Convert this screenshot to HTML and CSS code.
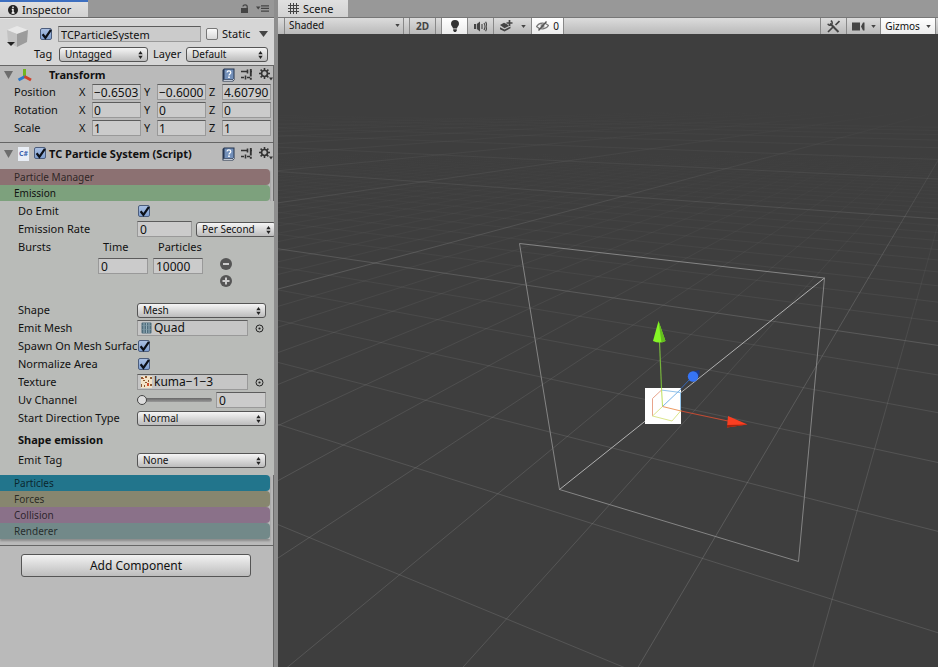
FILE: index.html
```html
<!DOCTYPE html>
<html lang="en">
<head>
<meta charset="utf-8">
<title>Scene editor</title>
<link rel="stylesheet" href="styles.css">
</head>
<body>
<svg class="sprite" aria-hidden="true">
  <symbol id="i-updown" viewBox="0 0 5 8"><path d="M0.3 3.2 2.5 0 4.7 3.2zM0.3 4.8 2.5 8 4.7 4.8z" fill="#222"/></symbol>
  <symbol id="i-check" viewBox="0 0 13 13"><path d="M2.6 6.2 5.4 9.8 10.9 1.8" fill="none" stroke="#0c1018" stroke-width="2.2"/></symbol>
  <symbol id="i-caret" viewBox="0 0 9 6"><path d="M0 0h9L4.5 6z" fill="#444"/></symbol>
  <symbol id="i-fold" viewBox="0 0 9 8"><path d="M0 0h9L4.5 8z" fill="#6d6d6d"/></symbol>
  <symbol id="i-book" viewBox="0 0 13 14"><path d="M.5 2 2 .5h10.500v11L11 13.500H.5z" fill="#24344f"/><path d="M1.500 12.300h9.200l1.100-1.100" stroke="#e8edf4" stroke-width="1" fill="none"/><rect x="2.500" y="1.500" width="9" height="9.600" fill="#7390ba"/><path d="M5 4.600c0-2.200 3.800-2.200 3.800 0 0 1.400-1.800 1.300-1.800 2.800" fill="none" stroke="#fff" stroke-width="1.200"/><circle cx="7" cy="9.200" r=".9" fill="#fff"/></symbol>
  <symbol id="i-preset" viewBox="0 0 12 13"><path d="M0 3.500h6M9 3.500h2M0 9.500h3M6 9.500h3" stroke="#333" stroke-width="1.500"/><path d="M6.500 1.500v4M4.500 7.500v4" stroke="#333" stroke-width="1.600"/><path d="M9.800 1v7.500M9.800 9.800v2" stroke="#333" stroke-width="1.900"/></symbol>
  <symbol id="i-gear" viewBox="0 0 14 13"><circle cx="5.500" cy="5.500" r="3" fill="none" stroke="#333" stroke-width="1.700"/><path d="M5.500 0v2.400M5.500 8.600V11M0 5.500h2.400M8.600 5.500H11M1.600 1.600l1.700 1.700M7.700 7.700l1.700 1.700M9.400 1.600 7.700 3.300M3.300 7.700 1.600 9.400" stroke="#333" stroke-width="1.600"/><path d="M10 9.500h4L12 12.500z" fill="#333"/></symbol>
  <symbol id="i-target" viewBox="0 0 9 9"><circle cx="4.500" cy="4.500" r="3.500" fill="none" stroke="#222" stroke-width="1"/><circle cx="4.500" cy="4.500" r="1.100" fill="#222"/></symbol>
</svg>

<div class="editor">
  <aside class="inspector">
    <header class="tabs">
      <div class="tab tab-active"><svg width="10" height="10" viewBox="0 0 10 10"><circle cx="5" cy="5" r="5" fill="#222"/><path d="M5 1.500v1.600M3.800 4.500H5v3.200M3.600 8h2.900" stroke="#fff" stroke-width="1.400" fill="none"/></svg>Inspector</div>
      <div class="tab-tools">
        <svg width="8" height="9" viewBox="0 0 8 9"><path d="M0 4h7v5H0z" fill="#444"/><path d="M2 2.600C2 .2 6.200.2 6.200 2.600V4.500" fill="none" stroke="#444" stroke-width="1.200"/></svg>
        <svg width="13" height="7" viewBox="0 0 13 7"><path d="M0 1.500h4.500L2.200 4.500zM5 .2h8v1.300H5zM5 2.800h8v1.300H5zM5 5.400h8v1.300H5z" fill="#444"/></svg>
      </div>
    </header>

    <section class="object">
      <svg class="cube" width="24" height="24" viewBox="0 0 24 24"><path d="M11 1 22 5 11 9 1 5z" fill="#e8e8e8"/><path d="M1 5 11 9v13L2 17z" fill="#c2c2c2"/><path d="M22 5 11 9v13l10-5z" fill="#9c9c9c"/><path d="M1 17h8l-4 4z" fill="#222"/></svg>
      <div class="object-fields">
        <div class="object-row">
          <span class="check"><input type="checkbox" checked aria-label="Active"><svg><use href="#i-check"/></svg></span>
          <input class="field name-field" type="text" value="TCParticleSystem" aria-label="Name">
          <span class="check check-empty"><input type="checkbox" id="static"></span>
          <label for="static">Static</label>
          <button class="bare" aria-label="Static options"><svg width="9" height="6"><use href="#i-caret"/></svg></button>
        </div>
        <div class="object-row tag-row">
          <label class="tag-label" for="tag">Tag</label>
          <span class="select select-tag"><select id="tag"><option>Untagged</option></select><svg><use href="#i-updown"/></svg></span>
          <label class="layer-label" for="layer">Layer</label>
          <span class="select select-layer"><select id="layer"><option>Default</option></select><svg><use href="#i-updown"/></svg></span>
        </div>
      </div>
    </section>

    <section class="component transform">
      <header class="component-head">
        <svg class="fold" width="9" height="8"><use href="#i-fold"/></svg>
        <svg width="16" height="14" viewBox="0 0 16 14"><path d="M7.500 8V1" stroke="#72b51e" stroke-width="3"/><path d="M8 8.500 1.500 12" stroke="#2d78c8" stroke-width="3"/><path d="M7.500 8.500 14 12" stroke="#d0402a" stroke-width="3"/></svg>
        <h2 class="no-check">Transform</h2>
        <div class="head-tools"><svg width="13" height="14"><use href="#i-book"/></svg><svg width="12" height="13"><use href="#i-preset"/></svg><svg width="14" height="13"><use href="#i-gear"/></svg></div>
      </header>
      <div class="vector"><span class="vector-name">Position</span>
        <label>X<input class="field" value="−0.6503"></label><label>Y<input class="field" value="−0.6000"></label><label>Z<input class="field" value="4.60790"></label></div>
      <div class="vector"><span class="vector-name">Rotation</span>
        <label>X<input class="field" value="0"></label><label>Y<input class="field" value="0"></label><label>Z<input class="field" value="0"></label></div>
      <div class="vector"><span class="vector-name">Scale</span>
        <label>X<input class="field" value="1"></label><label>Y<input class="field" value="1"></label><label>Z<input class="field" value="1"></label></div>
    </section>

    <section class="component script">
      <header class="component-head">
        <svg class="fold" width="9" height="8"><use href="#i-fold"/></svg>
        <span class="file-icon">C#</span>
        <span class="check"><input type="checkbox" id="tc" checked><svg><use href="#i-check"/></svg></span>
        <h2><label for="tc">TC Particle System (Script)</label></h2>
        <div class="head-tools"><svg width="13" height="14"><use href="#i-book"/></svg><svg width="12" height="13"><use href="#i-preset"/></svg><svg width="14" height="13"><use href="#i-gear"/></svg></div>
      </header>

      <div class="bars">
        <button class="bar bar-manager">Particle Manager</button>
        <button class="bar bar-emission">Emission</button>
      </div>

      <div class="props">
        <div class="prop"><label for="emit">Do Emit</label><span class="check"><input type="checkbox" id="emit" checked><svg><use href="#i-check"/></svg></span></div>
        <div class="prop"><label for="rate">Emission Rate</label><input class="field rate" id="rate" value="0"><span class="select select-rate"><select aria-label="Rate unit"><option>Per Second</option></select><svg><use href="#i-updown"/></svg></span></div>
        <div class="bursts">
          <span>Bursts</span><label for="time">Time</label><label for="count">Particles</label>
          <input class="field" id="time" value="0"><input class="field" id="count" value="10000">
          <div class="burst-buttons">
            <button class="bare" aria-label="Remove burst"><svg width="12" height="12" viewBox="0 0 12 12"><circle cx="6" cy="6" r="6" fill="#555"/><path d="M3 6h6" stroke="#ccc" stroke-width="2"/></svg></button>
            <button class="bare" aria-label="Add burst"><svg width="12" height="12" viewBox="0 0 12 12"><circle cx="6" cy="6" r="6" fill="#555"/><path d="M2.500 6h7M6 2.500v7" stroke="#ccc" stroke-width="2"/></svg></button>
          </div>
        </div>
        <div class="prop"><label for="shape">Shape</label><span class="select"><select id="shape"><option>Mesh</option></select><svg><use href="#i-updown"/></svg></span></div>
        <div class="prop"><label for="mesh">Emit Mesh</label><span class="object-field"><svg width="11" height="12" viewBox="0 0 11 12"><rect x=".5" y=".5" width="10" height="11" rx="1" fill="#4f6d7c"/><path d="M3 1v10M5.500 1v10M8 1v10" stroke="#a9c0cb" stroke-width=".8"/><path d="M1 3.500h9M1 7.500h9" stroke="#7d98a5" stroke-width=".6"/></svg><input id="mesh" value="Quad"></span><button class="bare" aria-label="Pick mesh"><svg width="9" height="9"><use href="#i-target"/></svg></button></div>
        <div class="prop"><label for="spawn">Spawn On Mesh Surfac</label><span class="check"><input type="checkbox" id="spawn" checked><svg><use href="#i-check"/></svg></span></div>
        <div class="prop"><label for="norm">Normalize Area</label><span class="check"><input type="checkbox" id="norm" checked><svg><use href="#i-check"/></svg></span></div>
        <div class="prop"><label for="tex">Texture</label><span class="object-field"><svg width="11" height="12" viewBox="0 0 11 12"><rect width="11" height="12" fill="#f3e3c8"/><path d="M0 1h2v2H0zM4 0h2v2H4zM9 1h2v2H9zM2 4h2v1H2zM7 4h1v2H7zM4 6h2v1H4zM9 8h2v2H9zM3 9h1v2H3zM0 8h1v3H0z" fill="#8c5a32"/><path d="M6 7h2v3H6zM2 2h1v1H2z" fill="#d4502c"/></svg><input id="tex" value="kuma−1−3"></span><button class="bare" aria-label="Pick texture"><svg width="9" height="9"><use href="#i-target"/></svg></button></div>
        <div class="prop"><label for="uv">Uv Channel</label><input class="slider" type="range" id="uv" min="0" max="3" value="0"><input class="field uv" aria-label="Uv Channel value" value="0"></div>
        <div class="prop"><label for="dir">Start Direction Type</label><span class="select"><select id="dir"><option>Normal</option></select><svg><use href="#i-updown"/></svg></span></div>
        <h3>Shape emission</h3>
        <div class="prop"><label for="etag">Emit Tag</label><span class="select"><select id="etag"><option>None</option></select><svg><use href="#i-updown"/></svg></span></div>
      </div>

      <div class="bars">
        <button class="bar bar-particles">Particles</button>
        <button class="bar bar-forces">Forces</button>
        <button class="bar bar-collision">Collision</button>
        <button class="bar bar-renderer">Renderer</button>
      </div>
    </section>

    <div class="add"><button class="add-button">Add Component</button></div>
  </aside>

  <main class="scene">
    <header class="tabs">
      <div class="tab"><svg width="11" height="11" viewBox="0 0 11 11"><path d="M2.500 0v11M5.500 0v11M8.500 0v11M0 2.500h11M0 5.500h11M0 8.500h11" stroke="#444" stroke-width="1"/></svg>Scene</div>
    </header>
    <div class="toolbar">
      <span class="shading"><select aria-label="Shading mode"><option>Shaded</option></select><svg width="5" height="3" viewBox="0 0 9 6"><use href="#i-caret"/></svg></span>
      <button class="tool two-d">2D</button>
      <button class="tool light on" aria-label="Lighting"><svg width="10" height="13" viewBox="0 0 10 13"><path d="M5 0a4 4 0 0 1 4 4c0 2-1.800 2.700-2 4.500H3C2.800 6.700 1 6 1 4a4 4 0 0 1 4-4zM3.200 9.200h3.600v1.600L5.800 12H4.200L3.200 10.800z" fill="#333"/></svg></button>
      <button class="tool" aria-label="Audio"><svg width="13" height="11" viewBox="0 0 13 11"><path d="M0 3h2v5H0zM2.800 3 6 .5v10L2.800 8z" fill="#444"/><path d="M8 3v5M10 2c1.200 2 1.200 5 0 7M11.600.8c1.600 3 1.600 6.400 0 9.400" fill="none" stroke="#444" stroke-width="1.100"/></svg></button>
      <button class="tool fx" aria-label="Effects"><svg width="13" height="12" viewBox="0 0 13 12"><path d="M0 5 4 2.800 7 4.300 9 6 4.500 8.200zM0 7.300l4.500 2.200 6-3v1.700l-6 3.200L0 9.200z" fill="#444"/><path d="M9.500 0v6M6.500 3h6" stroke="#444" stroke-width="1.700"/></svg><svg class="drop" width="5" height="3"><use href="#i-caret"/></svg></button>
      <button class="tool hidden-count on"><svg width="13" height="10" viewBox="0 0 13 10"><path d="M.5 5.500C3 1.500 9 1 12.500 4.500 10 8.500 4 9 .5 5.500z" fill="none" stroke="#777" stroke-width="1.200"/><circle cx="6.500" cy="5" r="2" fill="#888"/><path d="M2.500 9.500 10.500.5" stroke="#555" stroke-width="1.300"/></svg>0</button>
      <span class="spacer"></span>
      <button class="tool tools" aria-label="Tools"><svg width="13" height="13" viewBox="0 0 13 13"><path d="M3 3.500 11.500 12" stroke="#444" stroke-width="2"/><path d="M3.800.8A2.300 2.300 0 1 1 .8 3.800" fill="none" stroke="#444" stroke-width="1.500"/><path d="M1 12 7 6M8.500 5 12.500 1" stroke="#444" stroke-width="1.700"/></svg></button>
      <button class="tool camera" aria-label="Camera"><svg width="13" height="9" viewBox="0 0 13 9"><path d="M0 .5h8v8H0zM9 4.500 11 .5h1.500v8H11z" fill="#444"/></svg><svg class="drop" width="5" height="3"><use href="#i-caret"/></svg></button>
      <button class="tool gizmos on">Gizmos<svg class="drop" width="5" height="3"><use href="#i-caret"/></svg></button>
    </div>
    <svg class="viewport" viewBox="278 34 660 633" preserveAspectRatio="xMinYMin slice" role="img" aria-label="Scene view">
      <defs>
        <linearGradient id="major" gradientUnits="userSpaceOnUse" x1="0" y1="110" x2="0" y2="270"><stop offset="0" stop-color="#8a8a8a" stop-opacity="0"/><stop offset="1" stop-color="#8a8a8a" stop-opacity=".36"/></linearGradient>
        <linearGradient id="minor" gradientUnits="userSpaceOnUse" x1="0" y1="150" x2="0" y2="480"><stop offset="0" stop-color="#8a8a8a" stop-opacity="0"/><stop offset=".3" stop-color="#8a8a8a" stop-opacity=".09"/><stop offset="1" stop-color="#8a8a8a" stop-opacity=".3"/></linearGradient>
      </defs>
      <g id="grid"></g>
      <g fill="none" stroke="#858585" stroke-width="1">
        <path d="M519.500 243.500 824.500 278 798.500 561.500 559.500 489.500z"/>
        <path d="M559.500 489.500 824.500 278" stroke="#b0b0b0"/>
      </g>
      <rect x="645" y="388" width="36" height="36" fill="#fff"/>
      <path d="M652.500 416v-17.500l8.500-8" fill="none" stroke="#e8a48c"/>
      <path d="M661 390l19.500 2.500v18" fill="none" stroke="#93c3ea"/>
      <path d="M652.500 416 672 421l9-10.500M652.500 416l10-9.500" fill="none" stroke="#dbe68c"/>
      <path d="M662.500 406.500 681 389" stroke="#79b4e8"/>
      <path d="M681 388.500 690 379" stroke="#3668b8"/>
      <path d="M662.500 406.500 661.500 388" stroke="#bfe05a"/>
      <path d="M661.500 388 659.500 342" stroke="#76b33c" stroke-width="1.200"/>
      <path d="M662.500 406.500 681 411" stroke="#ee9a62"/>
      <path d="M681 411 728 421" stroke="#c24b34" stroke-width="1.200"/>
      <path d="M658.500 321 665.500 341q-6 3-12.500 0z" fill="#85f626"/><path d="M658.500 321 665.500 341l-4 1.500z" fill="#63bd1e"/>
      <path d="M691 372l8.500-2v5l-4 5z" fill="#1b3a86"/><circle cx="693" cy="376.500" r="5.200" fill="#3674f5"/>
      <path d="M728 416 747.500 424.500 727 427.500z" fill="#fb3e21"/><path d="M727 425 747.500 424.500 727 427.500z" fill="#a3240f"/>
    </svg>
  </main>
</div>
<script src="grid.js"></script>
</body>
</html>
```
FILE: styles.css
```css
* { box-sizing: border-box; }
html, body { height: 100%; }
body { margin: 0; overflow: hidden; background: #8f8f8f; color: #111; font: 11px/18px "Noto Sans", "Open Sans", sans-serif; }
input, select, button { font: inherit; color: inherit; margin: 0; padding: 0; border: 0; border-radius: 0; }
h2, h3 { margin: 0; font-size: 11px; line-height: 18px; font-weight: 700; }
svg { display: block; flex: none; }
.sprite { position: absolute; width: 0; height: 0; }

.editor { display: grid; grid-template-columns: 278px minmax(0, 1fr); min-height: 100vh; }
.inspector { min-width: 0; overflow: hidden; background: #bababa; border-right: 4px solid #8e8e8e; box-shadow: inset -1px 0 #6a6a6a; }
.scene { display: flex; flex-direction: column; min-width: 0; background: #3e3e3e; }

/* Tabs */
.tabs { display: flex; height: 17px; background: #989898; }
.tab { display: flex; align-items: center; gap: 4px; padding: 0 14px 0 10px; background: linear-gradient(#e0e0e0, #d2d2d2); }
.tab-active { width: 88px; padding: 0 0 0 8px; border-top: 2px solid #3d6fc0; }
.tab-tools { display: flex; align-items: center; gap: 7px; margin-left: auto; padding-right: 5px; }

/* Shared controls */
.bare { display: grid; place-items: center; background: none; }
.field { min-width: 0; height: 16px; padding: 0 2px; background: #cbcbcb; border: 1px solid #999; border-top-color: #5c5c5c; font-size: 12px; line-height: 14px; }
.check { position: relative; flex: none; width: 13px; height: 13px; }
.check input { display: block; appearance: none; width: 12px; height: 12px; background: linear-gradient(#a9bfe2, #7f9fd0); border: 1px solid #4c5d7c; border-radius: 2px; }
.check svg { position: absolute; inset: 0; width: 13px; height: 13px; pointer-events: none; }
.check-empty input { background: linear-gradient(#fafafa, #d8d8d8); border-color: #777; }
.select { position: relative; flex: 1; min-width: 0; height: 15px; }
.select select { display: block; width: 100%; height: 15px; padding-left: 5px; appearance: none; background: linear-gradient(#f5f5f5, #bcbcbc); border: 1px solid #555; border-radius: 3px; font-size: 10px; line-height: 13px; }
.select svg { position: absolute; right: 5px; top: 4px; width: 5px; height: 8px; pointer-events: none; }

/* Object header */
.object { display: flex; gap: 4px; height: 48px; padding: 6px 6px 0 6px; background: #d6d6d6; border-top: 1px solid #6a6a6a; box-shadow: inset 0 1px #e6e6e6; }
.object-fields { flex: 1; min-width: 0; }
.object-row { display: flex; align-items: center; gap: 5px; height: 20px; padding-left: 6px; }
.object-row .name-field { flex: 1; font-size: 11px; }
.object-row label { flex: none; width: 30px; }
.object-row .check-empty { margin-right: -2px; }
.object-row .bare { margin-left: 2px; width: 9px; }
.object-row.tag-row { padding-left: 0; }
.tag-row .tag-label { width: 20px; }
.tag-row .layer-label { width: 28px; }
.select-layer { flex: 0 0 82px; }
.cube { margin-top: 1px; }

/* Components */
.component { border-top: 1px solid #666; }
.component-head { display: flex; align-items: center; gap: 4px; height: 17px; padding: 0 1px 0 4px; }
.component-head h2 { flex: 1; white-space: nowrap; }
.component-head .no-check { margin-left: 12px; }
.head-tools { display: flex; align-items: center; gap: 6px; }
.transform { height: 77px; }
.vector { display: flex; gap: 3px; height: 18px; padding: 0 3px 0 14px; }
.vector-name { width: 62px; }
.vector label { display: flex; flex: 1; align-items: center; min-width: 0; }
.vector .field { flex: 1; width: 0; margin-left: auto; padding: 0 1px; max-width: 49px; }
.file-icon { width: 11px; height: 14px; margin: 0 1px; background: #e9eef6; color: #3b62ad; font-size: 7px; line-height: 14px; font-weight: 700; text-align: center; }
.script { padding-top: 2px; border-bottom: 1px solid #666; padding-bottom: 6px; }
.script .component-head h2 { margin-left: -2px; }
.bars { margin-right: 4px; box-shadow: 0 2px 2px rgba(0, 0, 0, .25); }
.script .bars:nth-child(2) { margin-top: 7px; }
.bar { display: block; width: 100%; height: 16px; padding-left: 14px; border-radius: 0 4px 4px 0; text-align: left; font-size: 10px; line-height: 16px; color: rgba(0, 0, 0, .7); }
.bar-manager { background: #8c7172; }
.bar-emission { background: #7da17d; color: #111; }
.bar-particles { background: #22758c; }
.bar-forces { background: #87866f; }
.bar-collision { background: #8a7189; }
.bar-renderer { background: #728989; }
.props { padding: 1px 0 6px 18px; background: #b9bbb8; }
.prop { display: flex; align-items: center; height: 18px; padding-right: 8px; }
.prop > label { flex: none; width: 119px; overflow: hidden; white-space: nowrap; }
.prop > .check { margin-left: 1px; }
.rate { width: 55px; margin-right: 4px; }
.select-rate { margin-right: -10px; }
.bursts { display: grid; grid-template-columns: 75px 50px 50px 24px; column-gap: 5px; grid-template-rows: 20px 43px; }
.bursts label { padding-left: 5px; }
.bursts input:first-of-type { grid-column: 2; }
.burst-buttons { display: grid; align-content: start; gap: 5px; justify-content: end; }
.object-field { display: flex; align-items: center; gap: 2px; width: 111px; height: 16px; padding-left: 3px; background: #c6c6c6; border: 1px solid #999; border-top-color: #5c5c5c; }
.object-field input { flex: 1; min-width: 0; height: 14px; background: none; font-size: 12px; }
.object-field + .bare { width: 9px; margin-left: 7px; }
.slider { appearance: none; width: 75px; height: 12px; margin-right: 4px; background: none; }
.slider::-webkit-slider-runnable-track { height: 4px; background: linear-gradient(#666, #999); border-radius: 2px; }
.slider::-webkit-slider-thumb { appearance: none; width: 10px; height: 10px; margin-top: -3px; background: #ddd; border: 1px solid #444; border-radius: 50%; }
.uv { flex: 1; }
.props h3 { height: 24px; line-height: 26px; }
.add { padding: 8px 23px 0 21px; }
.add-button { display: block; width: 100%; height: 23px; background: linear-gradient(#f2f2f2, #bdbdbd); border: 1px solid #555; border-radius: 3px; font-size: 12px; }

/* Scene toolbar */
.toolbar { display: flex; height: 17px; padding: 0 2px 0 6px; background: linear-gradient(#dcdcdc, #b9b9b9); border-top: 1px solid #777; font-size: 10px; line-height: 15px; }
.shading { position: relative; width: 120px; margin-right: 5px; border: 1px solid #888; border-width: 0 1px; }
.shading select { display: block; width: 100%; height: 15px; padding-left: 4px; appearance: none; background: none; }
.shading svg { position: absolute; right: 3px; top: 6px; }
.tool { display: flex; align-items: center; justify-content: center; width: 26px; height: 16px; background: none; border-right: 1px solid #888; }
.tool.on { background: linear-gradient(#fff, #ececec); }
.two-d { width: 27px; border-left: 1px solid #888; font-weight: 700; color: #444; }
.light { width: 27px; margin-left: 5px; border-left: 1px solid #888; }
.fx { width: 38px; gap: 8px; }
.hidden-count { width: 32px; gap: 4px; }
.spacer { flex: 1; }
.tools { width: 27px; border-left: 1px solid #888; }
.camera { width: 34px; gap: 6px; }
.gizmos { width: 55px; gap: 6px; }
.viewport { flex: 1; width: 100%; height: 0; min-height: 0; background: #3e3e3e; }
```
FILE: grid.js
```js
// Ground grid: u and v are ground coordinates, one unit = ten cells.
const project = (u, v) => {
  const w = 1 - 0.28984 * u + 0.709 * v;
  return [(219.8 * u + 689.5 * v + 374.8) / w, (-28.15 * u + 72.5 * v + 263) / w];
};
const grid = document.getElementById('grid');
const addLine = (a, b, major) => {
  const line = document.createElementNS('http://www.w3.org/2000/svg', 'path');
  line.setAttribute('d', `M${a[0].toFixed(1)} ${a[1].toFixed(1)} ${b[0].toFixed(1)} ${b[1].toFixed(1)}`);
  line.setAttribute('stroke', major ? 'url(#major)' : 'url(#minor)');
  grid.appendChild(line);
};
for (let i = -80; i <= 30; i++) {
  const u = i / 10;
  addLine(project(u, (0.1 - 1 + 0.28984 * u) / 0.709), project(u, 30), i % 10 === 0);
}
for (let i = -14; i <= 80; i++) {
  const v = i / 10;
  addLine(project((1 + 0.709 * v - 0.1) / 0.28984, v), project(-30, v), i % 10 === 0);
}
```
